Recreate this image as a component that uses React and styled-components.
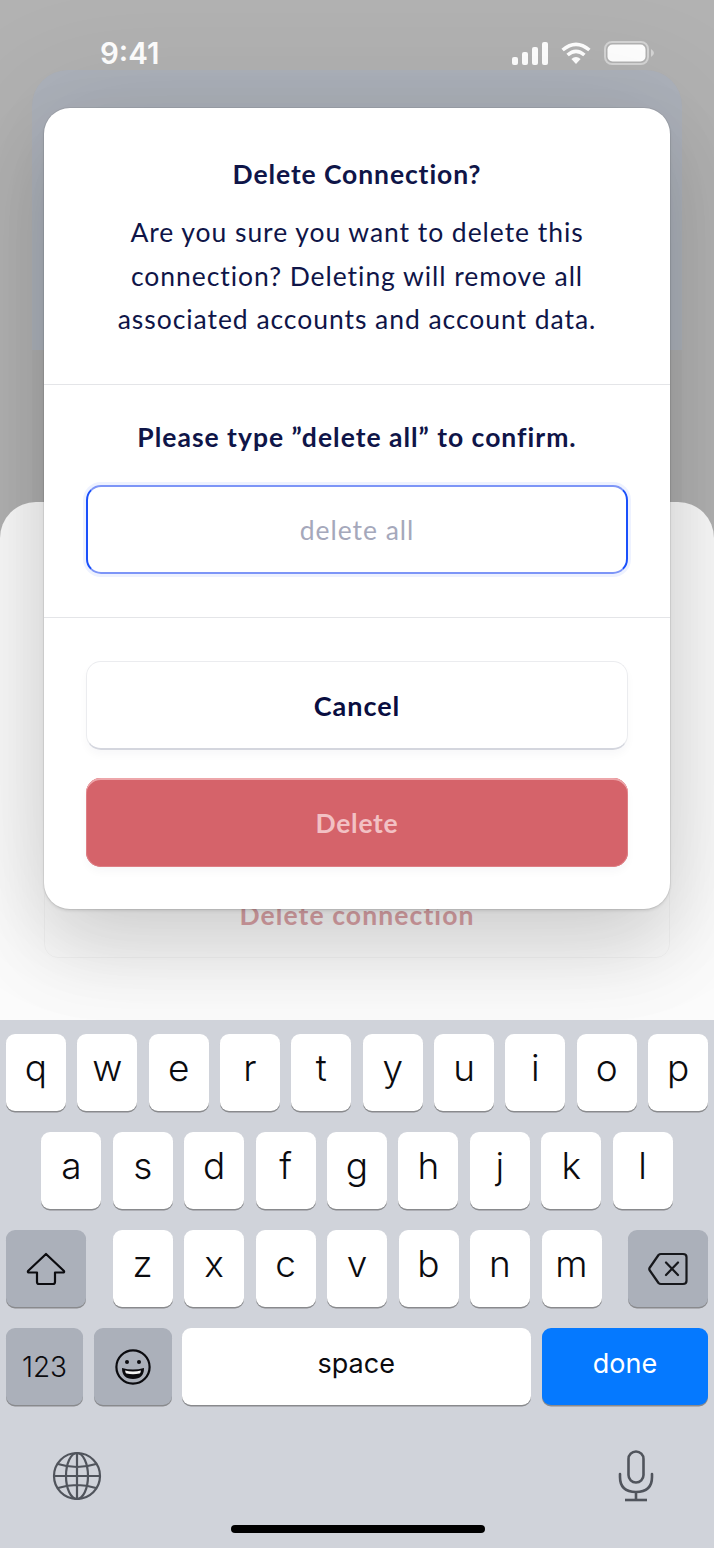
import React from 'react'
import styled, { createGlobalStyle } from 'styled-components'

const rows = [
  ['q', 'w', 'e', 'r', 't', 'y', 'u', 'i', 'o', 'p'],
  ['a', 's', 'd', 'f', 'g', 'h', 'j', 'k', 'l'],
  ['z', 'x', 'c', 'v', 'b', 'n', 'm'],
]

const GlobalStyle = createGlobalStyle`
  html, body {
    margin: 0;
    padding: 0;
  }
  body {
    background: #fff;
  }
`

const ShiftIcon = () => (
  <svg width="40" height="34" viewBox="0 0 40 34" fill="none" stroke="#0b0b0f" strokeWidth="2.2" strokeLinejoin="round">
    <path d="M20 2 L38 19 Q38.5 20.5 37 20.5 L29 20.5 L29 30 Q29 32 27 32 L13 32 Q11 32 11 30 L11 20.5 L3 20.5 Q1.5 20.5 2 19 Z" />
  </svg>
)

const BackspaceIcon = () => (
  <svg width="40" height="34" viewBox="0 0 40 34" fill="none" stroke="#17181c" strokeWidth="2.2" strokeLinecap="round" strokeLinejoin="round">
    <path d="M13 2 L35 2 Q38.5 2 38.5 5 L38.5 29 Q38.5 32 35 32 L13 32 Q11.5 32 10.5 31 L1.5 18 Q1 17 1.5 16 L10.5 3 Q11.5 2 13 2 Z" />
    <path d="M18 10.5 L30 23 M30 10.5 L18 23" />
  </svg>
)

const SmileIcon = () => (
  <svg width="38" height="38" viewBox="0 0 38 38" fill="none">
    <circle cx="19" cy="19" r="16.6" stroke="#0b0b0f" strokeWidth="2.2" />
    <circle cx="13" cy="14" r="2" fill="#0b0b0f" />
    <circle cx="25" cy="14" r="2" fill="#0b0b0f" />
    <path d="M8 20 Q19 23 30 20 Q30 31 19 31 Q8 31 8 20 Z" fill="#0b0b0f" />
    <path d="M11 22.4 Q19 24.4 27 22.4 Q26.5 25 25.5 25.6 Q19 27 12.5 25.6 Q11.5 25 11 22.4 Z" fill="#f4f4f4" />
  </svg>
)

const GlobeIcon = () => (
  <svg width="50" height="50" viewBox="0 0 50 50" fill="none" stroke="#50545c" strokeWidth="2.2">
    <circle cx="25" cy="25" r="23" />
    <ellipse cx="25" cy="25" rx="11" ry="23" />
    <path d="M25 2 V48 M2 25 H48 M6 13 Q25 19 44 13 M6 37 Q25 31 44 37" />
  </svg>
)

const MicIcon = () => (
  <svg width="36" height="52" viewBox="0 0 36 52" fill="none" stroke="#50545c" strokeWidth="2.6" strokeLinecap="round">
    <rect x="10.5" y="1.5" width="15" height="31" rx="7.5" />
    <path d="M2 24 V27 Q2 42 18 42 Q34 42 34 27 V24 M18 42 V49" />
    <path d="M7 50 H29" strokeLinecap="butt" />
  </svg>
)

const SignalIcon = () => (
  <svg width="36" height="23" viewBox="0 0 36 23" fill="#fff">
    <rect x="0" y="15" width="6" height="8" rx="2" />
    <rect x="10" y="10" width="6" height="13" rx="2" />
    <rect x="20" y="5" width="6" height="18" rx="2" />
    <rect x="30" y="0" width="6" height="23" rx="2" />
  </svg>
)

const WifiIcon = () => (
  <svg width="30" height="23" viewBox="0 0 30 23" fill="none" stroke="#fff" strokeWidth="3.6">
    <path d="M1.6 8 Q15 -3.4 28.4 8" />
    <path d="M6.6 13 Q15 5.6 23.4 13" />
    <path d="M15 22 L10.4 17 Q15 13 19.6 17 Z" fill="#fff" stroke="none" />
  </svg>
)

const BatteryIcon = () => (
  <svg width="50" height="24" viewBox="0 0 50 24" fill="none">
    <rect x="1" y="1" width="43" height="22" rx="7" stroke="#fff" strokeOpacity="0.45" strokeWidth="2" />
    <rect x="3.5" y="3.5" width="38" height="17" rx="5" fill="#fff" />
    <path d="M47 8 Q50 10 50 12 Q50 14 47 16 Z" fill="#fff" fillOpacity="0.45" />
  </svg>
)

export default function App() {
  return (
    <Screen>
      <GlobalStyle />
      <Behind>
        <BackCard>
          <BackCardTop />
        </BackCard>
        <Sheet>
          <SheetCard>
            <DeleteLink>Delete connection</DeleteLink>
          </SheetCard>
        </Sheet>
      </Behind>

      <StatusBar>
        <Clock>9:41</Clock>
        <StatusIcons>
          <SignalIcon />
          <WifiIcon />
          <BatteryIcon />
        </StatusIcons>
      </StatusBar>

      <Modal>
        <Intro>
          <Title>Delete Connection?</Title>
          <Message>
            Are you sure you want to delete this connection? Deleting will remove all associated accounts and account data.
          </Message>
        </Intro>
        <Confirm>
          <Prompt>Please type ”delete all” to confirm.</Prompt>
          <Field>delete all</Field>
        </Confirm>
        <Actions>
          <CancelButton>Cancel</CancelButton>
          <DeleteButton>Delete</DeleteButton>
        </Actions>
      </Modal>

      <Keyboard>
        <KeyRow>
          {rows[0].map(k => <Key key={k}>{k}</Key>)}
        </KeyRow>
        <KeyRow $center>
          {rows[1].map(k => <Key key={k}>{k}</Key>)}
        </KeyRow>
        <KeyRow>
          <ModKey $width={80}><ShiftIcon /></ModKey>
          <LetterGroup>
            {rows[2].map(k => <Key key={k}>{k}</Key>)}
          </LetterGroup>
          <ModKey $width={80}><BackspaceIcon /></ModKey>
        </KeyRow>
        <BottomRow>
          <ModKey $width={77}><NumLabel>123</NumLabel></ModKey>
          <ModKey $width={78}><SmileIcon /></ModKey>
          <SpaceKey>space</SpaceKey>
          <DoneKey>done</DoneKey>
        </BottomRow>
        <SystemRow>
          <GlobeIcon />
          <MicIcon />
        </SystemRow>
        <HomeBar />
      </Keyboard>
    </Screen>
  )
}

const Screen = styled.div`
  position: relative;
  width: 714px;
  height: 1548px;
  overflow: hidden;
  display: flex;
  flex-direction: column;
  background: #b2b2b2;
  font-family: Lato, "Open Sans", sans-serif;
`

const Behind = styled.div`
  position: absolute;
  inset: 0 0 528px 0;
  overflow: hidden;
`

const BackCard = styled.div`
  position: absolute;
  top: 70px;
  left: 32px;
  right: 32px;
  height: 500px;
  border-radius: 36px 36px 0 0;
  background: #afafaf;
  overflow: hidden;
`

const BackCardTop = styled.div`
  height: 280px;
  background: #adb2bb;
`

const Sheet = styled.div`
  position: absolute;
  top: 502px;
  left: 0;
  right: 0;
  bottom: 0;
  border-radius: 36px 36px 0 0;
  background: #fbfbfb;
`

const SheetCard = styled.div`
  position: absolute;
  top: 380px;
  left: 44px;
  right: 44px;
  height: 76px;
  border-radius: 14px;
  border: 1px solid rgba(0, 0, 0, 0.03);
  display: flex;
  justify-content: center;
  box-sizing: border-box;
`

const DeleteLink = styled.div`
  margin-top: 16px;
  font-size: 26.5px;
  line-height: 32px;
  font-weight: 700;
  letter-spacing: 1.1px;
  color: #dba3a7;
`

const StatusBar = styled.div`
  position: relative;
  display: flex;
  justify-content: space-between;
  align-items: center;
  height: 24px;
  padding: 41px 60px 0 100px;
`

const Clock = styled.div`
  font-family: Inter, sans-serif;
  font-size: 29.5px;
  font-weight: 600;
  color: #fff;
`

const StatusIcons = styled.div`
  display: flex;
  align-items: center;
  gap: 13px;
`

const Modal = styled.div`
  position: absolute;
  top: 108px;
  left: 44px;
  width: 626px;
  height: 801px;
  box-sizing: border-box;
  border-radius: 26px;
  background: #fff;
  box-shadow: 0 0 0 1px rgba(0, 0, 0, 0.06), 0 2px 3px rgba(0, 0, 0, 0.1), 0 40px 80px 0 rgba(0, 0, 0, 0.13), 0 0 120px 20px rgba(0, 0, 0, 0.08);
  display: flex;
  flex-direction: column;
  color: #0f1548;
`

const Intro = styled.div`
  height: 277px;
  box-sizing: border-box;
  padding: 50px 40px 0;
  border-bottom: 1px solid #e4e5e8;
  text-align: center;
`

const Title = styled.div`
  font-size: 26.5px;
  line-height: 32px;
  font-weight: 700;
  letter-spacing: 0.9px;
`

const Message = styled.div`
  margin: 21px auto 0;
  max-width: 520px;
  font-size: 26.5px;
  line-height: 43.5px;
  letter-spacing: 0.95px;
`

const Confirm = styled.div`
  height: 233px;
  box-sizing: border-box;
  padding: 36px 42px 0;
  border-bottom: 1px solid #e4e5e8;
  text-align: center;
`

const Prompt = styled.div`
  font-size: 26.5px;
  line-height: 32px;
  font-weight: 700;
  letter-spacing: 1px;
  white-space: nowrap;
`

const Field = styled.div`
  margin-top: 32px;
  height: 89px;
  box-sizing: border-box;
  border: 2px solid;
  border-color: #7d95f7 #1a50fb;
  border-radius: 15px;
  box-shadow: 0 0 0 3px #eef2ff;
  display: flex;
  align-items: center;
  justify-content: center;
  font-size: 26.5px;
  letter-spacing: 0.95px;
  color: #a5a8bb;
`

const Actions = styled.div`
  padding: 43px 42px 0;
  display: flex;
  flex-direction: column;
  gap: 28px;
`

const CancelButton = styled.div`
  height: 89px;
  box-sizing: border-box;
  border: 1px solid #ebecef;
  border-bottom: 2px solid #d4d6de;
  border-radius: 15px;
  box-shadow: 0 5px 8px rgba(20, 20, 60, 0.03);
  display: flex;
  align-items: center;
  justify-content: center;
  font-size: 27px;
  font-weight: 700;
  letter-spacing: 1px;
  color: #090d40;
`

const DeleteButton = styled.div`
  height: 89px;
  box-sizing: border-box;
  border-radius: 15px;
  background: #d5636a;
  box-shadow: inset 0 2px 0 #eda6aa, inset 0 0 0 1px #de7f85, 0 5px 8px rgba(20, 20, 60, 0.03);
  display: flex;
  align-items: center;
  justify-content: center;
  font-size: 26.5px;
  font-weight: 700;
  letter-spacing: 0.7px;
  color: #f2c1c4;
`

const Keyboard = styled.div`
  position: relative;
  margin-top: auto;
  height: 528px;
  box-sizing: border-box;
  padding: 14px 6px 0;
  background: #d0d3da;
  font-family: Inter, "Liberation Sans", sans-serif;
  display: flex;
  flex-direction: column;
  gap: 21px;
`

const KeyRow = styled.div`
  display: flex;
  justify-content: ${({ $center }) => ($center ? 'center' : 'space-between')};
  gap: 11.4px;
`

const LetterGroup = styled.div`
  display: flex;
  gap: 11.5px;
`

const BottomRow = styled.div`
  display: flex;
  gap: 10.5px;
`

const Key = styled.div`
  width: 60px;
  height: 77px;
  border-radius: 9px;
  background: #fff;
  box-shadow: 0 1.5px 0 #898a8d;
  display: flex;
  align-items: center;
  justify-content: center;
  padding-bottom: 10px;
  box-sizing: border-box;
  font-size: 37px;
  font-weight: 300;
  color: #0b0b0f;
`

const ModKey = styled(Key)`
  width: ${({ $width }) => $width}px;
  background: #abb0ba;
  padding-bottom: 0;
`

const NumLabel = styled.span`
  font-size: 28px;
  font-weight: 300;
`

const SpaceKey = styled(Key)`
  flex: 1;
  padding-bottom: 6px;
  font-size: 27px;
  font-weight: 400;
`

const DoneKey = styled(Key)`
  width: 166px;
  margin-left: 1px;
  padding-bottom: 6px;
  background: #0579ff;
  color: #fff;
  font-size: 27px;
  font-weight: 400;
`

const SystemRow = styled.div`
  display: flex;
  justify-content: space-between;
  align-items: center;
  padding: 0 54px 0 46px;
  margin-top: 24px;
`

const HomeBar = styled.div`
  position: absolute;
  bottom: 15px;
  left: 231px;
  width: 254px;
  height: 8px;
  border-radius: 4px;
  background: #000;
`
